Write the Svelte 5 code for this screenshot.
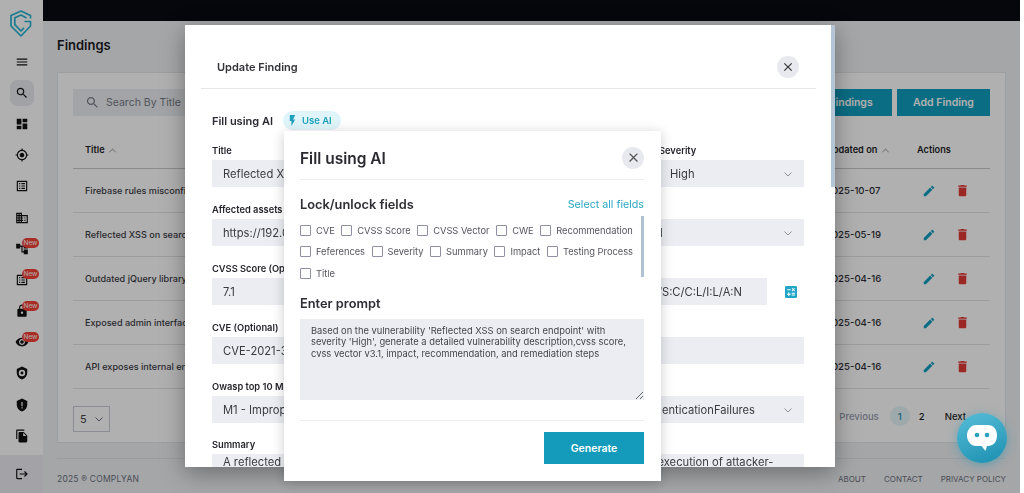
<script lang="ts">
  const paths = {
    menu: 'M3 18h18v-2H3v2zm0-5h18v-2H3v2zm0-7v2h18V6H3z',
    search: 'M15.5 14h-.79l-.28-.27C15.41 12.59 16 11.11 16 9.5 16 5.91 13.09 3 9.5 3S3 5.91 3 9.5 5.91 16 9.5 16c1.61 0 3.09-.59 4.23-1.57l.27.28v.79l5 4.99L20.49 19l-4.99-5zm-6 0C7.01 14 5 11.99 5 9.5S7.01 5 9.5 5 14 7.01 14 9.5 11.99 14 9.5 14z',
    dashboard: 'M3 13h8V3H3v10zm0 8h8v-6H3v6zm10 0h8V11h-8v10zm0-18v6h8V3h-8z',
    target: 'M12 8c-2.21 0-4 1.79-4 4s1.79 4 4 4 4-1.79 4-4-1.79-4-4-4zm8.94 3c-.46-4.17-3.77-7.48-7.94-7.94V1h-2v2.06C6.83 3.52 3.52 6.83 3.06 11H1v2h2.06c.46 4.17 3.77 7.48 7.94 7.94V23h2v-2.06c4.17-.46 7.48-3.77 7.94-7.94H23v-2h-2.06zM12 19c-3.87 0-7-3.13-7-7s3.13-7 7-7 7 3.13 7 7-3.13 7-7 7z',
    list: 'M19 5v14H5V5h14m1.1-2H3.9c-.5 0-.9.4-.9.9v16.2c0 .4.4.9.9.9h16.2c.4 0 .9-.5.9-.9V3.9c0-.5-.5-.9-.9-.9zM11 7h6v2h-6V7zm0 4h6v2h-6v-2zm0 4h6v2h-6zM7 7h2v2H7zm0 4h2v2H7zm0 4h2v2H7z',
    domain: 'M12 7V3H2v18h20V7H12zM6 19H4v-2h2v2zm0-4H4v-2h2v2zm0-4H4V9h2v2zm0-4H4V5h2v2zm4 12H8v-2h2v2zm0-4H8v-2h2v2zm0-4H8V9h2v2zm0-4H8V5h2v2zm10 12h-8v-2h2v-2h-2v-2h2v-2h-2V9h8v10zm-2-8h-2v2h2v-2zm0 4h-2v2h2v-2z',
    tree: 'M22 11V3h-7v3H9V3H2v8h7V8h2v10h4v3h7v-8h-7v3h-2V8h2v3z',
    lock: 'M18 8h-1V6c0-2.76-2.24-5-5-5S7 3.24 7 6v2H6c-1.1 0-2 .9-2 2v10c0 1.1.9 2 2 2h12c1.1 0 2-.9 2-2V10c0-1.1-.9-2-2-2zm-6 9c-1.1 0-2-.9-2-2s.9-2 2-2 2 .9 2 2-.9 2-2 2zm3.1-9H8.9V6c0-1.71 1.39-3.1 3.1-3.1 1.71 0 3.1 1.39 3.1 3.1v2z',
    eye: 'M12 4.5C7 4.5 2.73 7.61 1 12c1.73 4.39 6 7.5 11 7.5s9.27-3.11 11-7.5c-1.73-4.39-6-7.5-11-7.5zM12 17c-2.76 0-5-2.24-5-5s2.24-5 5-5 5 2.24 5 5-2.24 5-5 5zm0-8c-1.66 0-3 1.34-3 3s1.34 3 3 3 3-1.34 3-3-1.34-3-3-3z',
    shieldDot: 'M12 1L3 5v6c0 5.55 3.84 10.74 9 12 5.16-1.26 9-6.45 9-12V5l-9-4zm0 5.5a5.5 5.5 0 1 1 0 11 5.5 5.5 0 0 1 0-11zm0 3a2.5 2.5 0 1 0 0 5 2.5 2.5 0 0 0 0-5z',
    shieldAlert: 'M12 1L3 5v6c0 5.55 3.84 10.74 9 12 5.16-1.26 9-6.45 9-12V5l-9-4zm-1 6h2v7h-2V7zm0 9h2v2h-2v-2z',
    copy: 'M16 1H4c-1.1 0-2 .9-2 2v14h2V3h12V1zm-1 4l6 6v10c0 1.1-.9 2-2 2H7.99C6.89 23 6 22.1 6 21l.01-14c0-1.1.89-2 1.99-2h7zm-1 7h5.5L14 6.5V12z',
    logout: 'M17 7l-1.41 1.41L18.17 11H8v2h10.17l-2.58 2.58L17 17l5-5zM4 5h8V3H4c-1.1 0-2 .9-2 2v14c0 1.1.9 2 2 2h8v-2H4V5z',
    edit: 'M3 17.25V21h3.75L17.81 9.94l-3.75-3.75L3 17.25zM20.71 7.04c.39-.39.39-1.02 0-1.41l-2.34-2.34c-.39-.39-1.02-.39-1.41 0l-1.83 1.83 3.75 3.75 1.83-1.83z',
    trash: 'M6 19c0 1.1.9 2 2 2h8c1.1 0 2-.9 2-2V7H6v12zM19 4h-3.5l-1-1h-5l-1 1H5v2h14V4z',
    close: 'M19 6.41L17.59 5 12 10.59 6.41 5 5 6.41 10.59 12 5 17.59 6.41 19 12 13.41 17.59 19 19 17.59 13.41 12z',
    calc: 'M19 3H5c-1.1 0-2 .9-2 2v14c0 1.1.9 2 2 2h14c1.1 0 2-.9 2-2V5c0-1.1-.9-2-2-2zm-5.97 4.06L14.09 6l1.41 1.41L16.91 6l1.06 1.06-1.41 1.41 1.41 1.41-1.06 1.06-1.41-1.4-1.41 1.41-1.06-1.06 1.41-1.41-1.41-1.42zm-6.78.66h5v1.5h-5v-1.5zM11.5 16h-2v2H8v-2H6v-1.5h2v-2h1.5v2h2V16zm6.5 1.25h-5v-1.5h5v1.5zm0-2.5h-5v-1.5h5v1.5z',
    bolt: 'M7 2v11h3v9l7-12h-4l4-8z'
  };

  const nav = [
    { icon: 'menu' },
    { icon: 'search', active: true },
    { icon: 'dashboard' },
    { icon: 'target' },
    { icon: 'list' },
    { icon: 'domain' },
    { icon: 'tree', isNew: true },
    { icon: 'list', isNew: true },
    { icon: 'lock', isNew: true },
    { icon: 'eye', isNew: true },
    { icon: 'shieldDot' },
    { icon: 'shieldAlert' },
    { icon: 'copy' }
  ];

  const findings = [
    { title: 'Firebase rules misconfiguration', date: '2025-10-07' },
    { title: 'Reflected XSS on search endpoint', date: '2025-05-19' },
    { title: 'Outdated jQuery library in use', date: '2025-04-16' },
    { title: 'Exposed admin interface on portal', date: '2025-04-16' },
    { title: 'API exposes internal endpoints', date: '2025-04-16' }
  ];

  const lockFields = [
    'CVE', 'CVSS Score', 'CVSS Vector', 'CWE', 'Recommendation',
    'Feferences', 'Severity', 'Summary', 'Impact', 'Testing Process', 'Title'
  ];

  const prompt = "Based on the vulnerability 'Reflected XSS on search endpoint' with severity 'High', generate a detailed vulnerability description,cvss score, cvss vector v3.1, impact, recommendation, and remediation steps";
</script>

{#snippet icon(name, size = 14)}
  <svg class="icon" width={size} height={size} viewBox="0 0 24 24" fill="currentColor" aria-hidden="true">
    <path fill-rule="evenodd" d={paths[name]} />
  </svg>
{/snippet}

{#snippet chevron()}
  <svg class="chev" width="10" height="10" viewBox="0 0 10 10" fill="none" stroke="currentColor" stroke-width="1" aria-hidden="true">
    <path d="M1.500 3.500 5 7l3.500-3.500" />
  </svg>
{/snippet}

<div class="page">
  <aside class="sidebar">
    <div class="logo">
      <svg width="22" height="28" viewBox="0 0 22 28" fill="none" stroke="#27b4d2" stroke-width="1.700" stroke-linejoin="round" aria-hidden="true">
        <path d="M20.500 8.500V5.500L11 1 1 5.500V16l10 10 9.500-10v-4.500H14.500" />
        <path d="M16.500 8 11 5 4.800 7.700v7l6.200 6.300 3-3.200" />
      </svg>
    </div>
    <nav class="nav">
      {#each nav as item}
        <div class="nav-item" class:active={item.active}>
          {@render icon(item.icon, 14)}
          {#if item.isNew}<span class="new">New</span>{/if}
        </div>
      {/each}
    </nav>
    <div class="logout">{@render icon('logout', 14)}</div>
  </aside>

  <div class="content">
    <div class="topbar"></div>
    <main class="main">
      <h1>Findings</h1>
      <section class="card">
        <div class="toolbar">
          <div class="search">{@render icon('search', 15)}<span>Search By Title</span></div>
          <button class="btn">Export Findings</button>
          <button class="btn add">Add Finding</button>
        </div>
        <div class="row head">
          <span>Title <i class="up"></i></span>
          <span>Updated on <i class="up"></i></span>
          <span>Actions</span>
        </div>
        {#each findings as f}
          <div class="row">
            <span>{f.title}</span>
            <span class="date">{f.date}</span>
            <span class="actions">
              <span class="edit">{@render icon('edit', 14)}</span>
              <span class="del">{@render icon('trash', 15)}</span>
            </span>
          </div>
        {/each}
        <div class="table-foot">
          <div class="size">5 {@render chevron()}</div>
          <div class="pager">
            <span class="prev">Previous</span>
            <span class="num on">1</span>
            <span class="num">2</span>
            <span class="next">Next</span>
          </div>
        </div>
      </section>
      <footer class="foot">
        <span>2025 ® COMPLYAN</span>
        <span class="links"><span>ABOUT</span><span>CONTACT</span><span>PRIVACY POLICY</span></span>
      </footer>
    </main>
  </div>
  <div class="gutter"></div>
</div>

<div class="backdrop"></div>

<div class="modal">
  <div class="scroll-thumb"></div>
  <header class="modal-head">
    <span>Update Finding</span>
    <button class="close">{@render icon('close', 14)}</button>
  </header>
  <div class="modal-body">
    <div class="use-ai">
      <strong>Fill using AI</strong>
      <span class="pill">{@render icon('bolt', 13)}Use AI</span>
    </div>
    <div class="form-row">
      <label class="field grow"><span>Title</span><div class="input">Reflected XSS on search endpoint</div></label>
      <label class="field sev"><span>Severity</span><div class="input select">High {@render chevron()}</div></label>
    </div>
    <div class="form-row half">
      <label class="field"><span>Affected assets</span><div class="input">https://192.0.2.14/search</div></label>
      <label class="field"><span>Status</span><div class="input select">Internal Application Portal {@render chevron()}</div></label>
    </div>
    <div class="form-row half">
      <label class="field"><span>CVSS Score (Optional)</span><div class="input">7.1</div></label>
      <div class="vector-wrap">
        <label class="field"><span>CVSS Vector</span><div class="input vector">CVSS:3.1/AV:N/AC:L/PR:N/UI:R/S:C/C:L/I:L/A:N</div></label>
        <span class="calc">{@render icon('calc', 16)}</span>
      </div>
    </div>
    <div class="form-row half">
      <label class="field"><span>CVE (Optional)</span><div class="input">CVE-2021-3456</div></label>
      <label class="field"><span>CWE</span><div class="input"></div></label>
    </div>
    <div class="form-row half">
      <label class="field"><span>Owasp top 10 Mobile</span><div class="input select">M1 - Improper Credential Usage {@render chevron()}</div></label>
      <label class="field"><span>Owasp top 10 Web</span><div class="input select end">IdentificationAndAuthenticationFailures {@render chevron()}</div></label>
    </div>
    <label class="field summary"><span>Summary</span><div class="input area">A reflected XSS vulnerability in the search query endpoint enables arbitrary script execution of attacker-</div></label>
  </div>
</div>

<div class="ai-modal">
  <header class="ai-head">
    <h2>Fill using AI</h2>
    <button class="close">{@render icon('close', 15)}</button>
  </header>
  <div class="ai-title">
    <h3>Lock/unlock fields</h3>
    <span class="select-all">Select all fields</span>
  </div>
  <div class="locks">
    <div class="lock-thumb"></div>
    {#each lockFields as name}
      <label class="lock"><input type="checkbox" />{name}</label>
    {/each}
  </div>
  <h3 class="prompt-title">Enter prompt</h3>
  <textarea class="prompt" value={prompt}></textarea>
  <div class="ai-foot"><button class="generate">Generate</button></div>
</div>

<button class="chat" aria-label="Chat">
  <svg width="32" height="30" viewBox="0 0 32 30" aria-hidden="true">
    <path fill="#fff" d="M10 2h12c5 0 9 4 9 10.500S27 23 22 23h-1l-1.500 5-4-5H10C5 23 1 18 1 12.500S5 2 10 2z" />
    <circle cx="11" cy="12" r="2.300" fill="#2aa0bf" />
    <circle cx="21" cy="12" r="2.300" fill="#2aa0bf" />
  </svg>
</button>

<style>
  :global(body) {
    margin: 0;
    font-family: Inter, "Noto Sans", sans-serif;
    color: #2b2b33;
    background: #fff;
  }
  .page {
    display: flex;
    height: 493px;
    overflow: hidden;
  }
  .icon { display: block; flex: none; }
  .sidebar {
    width: 43px;
    flex: none;
    display: flex;
    flex-direction: column;
    background: #fff;
    color: #111;
  }
  .logo { height: 46px; padding: 10px 0 0 10px; box-sizing: border-box; }
  .nav { flex: 1; }
  .nav-item {
    position: relative;
    height: 31.200px;
    display: flex;
    align-items: center;
    justify-content: center;
  }
  .nav-item.active::before {
    content: '';
    position: absolute;
    left: 10px;
    top: 2.500px;
    width: 24px;
    height: 26px;
    border-radius: 7px;
    background: #e8ebef;
  }
  .nav-item .icon { position: relative; }
  .new {
    position: absolute;
    left: 22px;
    top: 5px;
    width: 17px;
    height: 10px;
    border-radius: 5px;
    background: #f54036;
    color: #fff;
    font-size: 6.500px;
    line-height: 10px;
    text-align: center;
  }
  .logout {
    height: 38px;
    display: flex;
    align-items: center;
    justify-content: center;
    background: #ecedf2;
  }
  .content { flex: 1; display: flex; flex-direction: column; min-width: 0; background: #eef1f4; }
  .gutter { width: 4px; flex: none; background: #fff; }
  .topbar { height: 21px; background: #0a0a14; flex: none; }
  .main { flex: 1; padding: 0 14px; display: flex; flex-direction: column; }
  h1 { margin: 15px 0 18px; font-size: 13px; line-height: 18px; font-weight: 600; color: #1a1a1e; }
  .card {
    background: #fff;
    border: 1px solid #e3e6ea;
    height: 371px;
    box-sizing: border-box;
    padding: 16px 15px;
  }
  .toolbar { display: flex; gap: 5px; height: 27px; margin-bottom: 18px; }
  .search {
    flex: 1;
    background: #eceef2;
    display: flex;
    align-items: center;
    gap: 6px;
    padding-left: 12px;
    color: #777b88;
    font-size: 10.500px;
  }
  .btn {
    width: 118px;
    border: 0;
    background: #0f9fc0;
    color: #fff;
    font: 600 10.500px Inter, sans-serif;
  }
  .btn.add { width: 93px; }
  .row {
    display: grid;
    grid-template-columns: 1fr 91px 73px;
    height: 44px;
    align-items: center;
    padding-left: 12px;
    font-size: 9.100px;
    font-weight: 500;
    color: #3b3b44;
    border-bottom: 1px solid #e2e4e8;
    box-sizing: border-box;
    white-space: nowrap;
  }
  .row.head {
    height: 35px;
    padding-bottom: 3px;
    font-weight: 600;
    color: #1f1f26;
    font-size: 9.200px;
    border-bottom-color: #c8cad0;
  }
  .up {
    display: inline-block;
    width: 4px;
    height: 4px;
    margin: 0 0 0 3px;
    border-left: 1px solid #aaa;
    border-top: 1px solid #aaa;
    transform: rotate(45deg) translate(1px, 1px);
  }
  .date { color: #2f2f36; font-size: 9.600px; }
  .actions { display: flex; gap: 19px; padding-left: 5px; align-items: center; }
  .edit { color: #0f9fc0; }
  .del { color: #e33a36; }
  .table-foot {
    display: flex;
    justify-content: space-between;
    align-items: flex-start;
    padding-top: 17px;
  }
  .size {
    width: 37px;
    height: 26px;
    box-sizing: border-box;
    border: 1px solid #c9ccd6;
    display: flex;
    align-items: center;
    gap: 7px;
    padding-left: 6px;
    font-size: 11px;
    color: #444;
  }
  .chev { color: #8a8c98; flex: none; }
  .size .chev { color: #6d7280; }
  .pager { display: flex; align-items: center; font-size: 9.500px; font-weight: 500; color: #1e1e24; padding-right: 24px; }
  .prev { color: #9a9db0; margin-right: 11px; }
  .num { width: 20px; height: 20px; border-radius: 50%; display: flex; align-items: center; justify-content: center; margin-right: 2px; }
  .num.on { background: #e6f3f7; color: #1a92ae; }
  .next { margin-left: 11px; }
  .foot {
    margin-top: 15px;
    border-top: 1px solid #dfe2e6;
    padding-top: 15px;
    display: flex;
    justify-content: space-between;
    font-size: 8.500px;
    color: #6c6f7c;
    letter-spacing: .2px;
  }
  .links { display: flex; gap: 18px; font-size: 8px; letter-spacing: 0; }

  .backdrop {
    position: fixed;
    left: 0;
    top: 0;
    width: 1020px;
    height: 493px;
    background: rgba(0, 0, 0, .31);
    backdrop-filter: blur(.5px);
  }
  .modal {
    position: fixed;
    left: 185px;
    top: 25px;
    width: 650px;
    height: 442px;
    background: #fff;
    overflow: hidden;
    box-shadow: 0 6px 22px rgba(0, 0, 0, .35);
  }
  .scroll-thumb {
    position: absolute;
    right: 0;
    top: 0;
    width: 4px;
    height: 162px;
    background: #b4c5d6;
  }
  .modal-head {
    margin: 0 19px 0 16px;
    height: 64px;
    padding: 20px 17px 0 16px;
    box-sizing: border-box;
    display: flex;
    justify-content: space-between;
    align-items: center;
    border-bottom: 1px solid #e6e7ea;
    font-size: 11px;
    font-weight: 600;
    color: #33333b;
  }
  .close {
    width: 22px;
    height: 22px;
    border: 0;
    padding: 0;
    border-radius: 50%;
    background: #e7e9ef;
    display: flex;
    align-items: center;
    justify-content: center;
    color: #333;
  }
  .modal-body { padding: 22px 31px 0 27px; }
  .use-ai { display: flex; align-items: center; gap: 10px; height: 19px; font-size: 11px; margin-bottom: 12px; }
  .use-ai strong { font-weight: 600; }
  .pill {
    display: flex;
    align-items: center;
    width: 58px;
    height: 19px;
    box-sizing: border-box;
    padding-left: 3px;
    gap: 3px;
    border-radius: 10px;
    background: #e0f5fa;
    color: #1d9fbd;
    font-size: 9.500px;
    font-weight: 600;
  }
  .form-row { display: flex; gap: 15px; margin-bottom: 14px; }
  .form-row.half > * { flex: 1 1 0; min-width: 0; }
  .grow { flex: 1; min-width: 0; }
  .sev { width: 145px; flex: none; }
  .field { display: block; min-width: 0; }
  .field > span {
    display: block;
    font-size: 9.300px;
    font-weight: 600;
    line-height: 18px;
    color: #25252c;
  }
  .summary { margin-top: -1px; }
  .input {
    height: 27px;
    box-sizing: border-box;
    background: #ecedf2;
    padding: 0 11px;
    display: flex;
    align-items: center;
    justify-content: space-between;
    font-size: 11.200px;
    color: #3a3a42;
    white-space: nowrap;
    overflow: hidden;
  }
  .input.select.end { justify-content: flex-end; gap: 28px; }
  .vector-wrap { display: flex; align-items: flex-end; gap: 16px; }
  .vector-wrap .field { flex: 1; min-width: 0; }
  .input.vector { justify-content: flex-end; padding-right: 25px; }
  .calc { color: #22a6c6; height: 27px; display: flex; align-items: center; width: 21px; }
  .area { height: 60px; align-items: flex-start; justify-content: flex-start; padding-top: 1px; }

  .ai-modal {
    position: fixed;
    left: 284px;
    top: 131px;
    width: 377px;
    height: 350px;
    box-sizing: border-box;
    padding: 0 17px 0 16px;
    background: #fff;
    box-shadow: 0 2px 12px rgba(0, 0, 0, .2);
  }
  .ai-head {
    height: 49px;
    display: flex;
    align-items: center;
    justify-content: space-between;
    border-bottom: 1px solid #ececef;
    padding-top: 5px;
    box-sizing: border-box;
  }
  .ai-head h2 { margin: 1px 0 0; font-size: 15.500px; font-weight: 600; color: #2a2a30; }
  .ai-head .close { color: #555; }
  .ai-title { display: flex; justify-content: space-between; align-items: center; margin-top: 14px; height: 20px; }
  h3 { margin: 0; font-size: 12.800px; font-weight: 600; color: #2e2e35; }
  .select-all { font-size: 10.700px; color: #2ba7c5; }
  .locks {
    position: relative;
    display: flex;
    flex-wrap: wrap;
    column-gap: 6.500px;
    row-gap: 10.500px;
    margin-top: 2px;
    padding: 8.500px 8px 0 0;
    width: 344px;
    box-sizing: border-box;
  }
  .lock-thumb {
    position: absolute;
    right: 0;
    top: 0;
    width: 3px;
    height: 61px;
    background: #b0c1d2;
  }
  .lock {
    display: flex;
    align-items: center;
    gap: 5px;
    font-size: 9.300px;
    line-height: 11px;
    color: #55555f;
  }
  .lock input {
    appearance: none;
    width: 11px;
    height: 11px;
    margin: 0;
    box-sizing: border-box;
    border: 1px solid #8f90a3;
    border-radius: 1px;
    background: #fff;
  }
  .prompt-title { margin-top: 15.500px; line-height: 20px; }
  .prompt {
    display: block;
    width: 344px;
    height: 81px;
    margin-top: 5px;
    box-sizing: border-box;
    padding: 6px 11px;
    border: 0;
    border-radius: 0;
    background: #ecedf2;
    font: 9.350px/11.300px Inter, sans-serif;
    color: #44444c;
    outline: none;
  }
  .ai-foot {
    margin-top: 20px;
    border-top: 1px solid #ececef;
    padding-top: 11px;
    display: flex;
    justify-content: flex-end;
  }
  .generate {
    width: 100px;
    height: 32px;
    border: 0;
    background: #149bbb;
    color: #fff;
    font: 600 10.500px Inter, sans-serif;
  }
  .chat {
    position: fixed;
    left: 957px;
    top: 413px;
    width: 50px;
    height: 50px;
    border: 0;
    padding: 0;
    border-radius: 50%;
    background: linear-gradient(160deg, #58bdd7, #1a8fb0);
    box-shadow: 0 2px 10px rgba(40, 150, 180, .5);
    display: flex;
    align-items: center;
    justify-content: center;
  }
</style>
